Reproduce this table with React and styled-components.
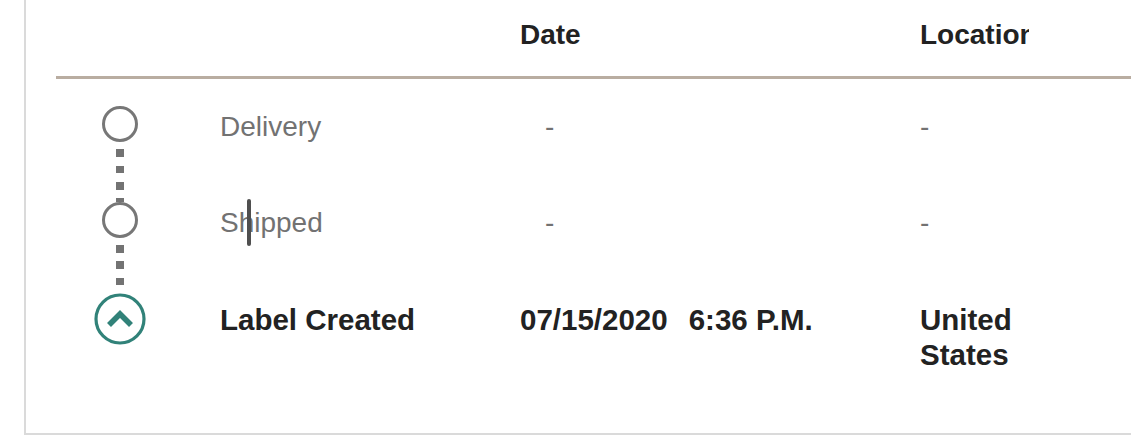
import React from 'react';
import styled, { createGlobalStyle } from 'styled-components';

const GlobalStyle = createGlobalStyle`
  html, body {
    margin: 0;
    padding: 0;
    background: #fff;
    overflow: hidden;
  }
  body {
    font-family: 'Liberation Sans', Arial, Helvetica, sans-serif;
    color: #222;
  }
`;

const Card = styled.div`
  margin: -2px -40px 0 24px;
  border: 2px solid #dadada;
  padding: 0 0 61px 30px;
  background: #fff;
`;

const Grid = styled.div`
  display: grid;
  grid-template-columns: 164px 300px 400px 1fr;
  align-items: start;
`;

const HeaderRow = styled(Grid)`
  padding: 17px 0 24px;
  border-bottom: 3px solid #b9ada1;
`;

const HeadCell = styled.div`
  font-size: 28px;
  line-height: 35px;
  font-weight: 700;
  color: #222;
  white-space: nowrap;
  overflow: hidden;
  width: ${({ $width }) => ($width ? `${$width}px` : 'auto')};
`;

const Body = styled.div`
  padding-top: 27px;
`;

const IconCell = styled.div`
  width: 128px;
  display: flex;
  flex-direction: column;
  align-items: center;
`;

const Ring = styled.div`
  width: 36px;
  height: 36px;
  box-sizing: border-box;
  border: 3px solid #777;
  border-radius: 50%;
  background: #fff;
`;

const Connector = styled.div`
  width: 8px;
  height: ${({ $length }) => $length}px;
  background: repeating-linear-gradient(
    to bottom,
    transparent 0 7px,
    #737373 7px 14.5px,
    transparent 14.5px 16.5px
  );
`;

const Cell = styled.div`
  position: relative;
  padding-top: ${({ $bold }) => ($bold ? 10 : 3)}px;
  padding-left: ${({ $indent }) => $indent || 0}px;
  font-size: ${({ $bold }) => ($bold ? 29.5 : 28)}px;
  line-height: ${({ $bold }) => ($bold ? '34.5px' : '35px')};
  font-weight: ${({ $bold }) => ($bold ? 700 : 400)};
  color: ${({ $bold }) => ($bold ? '#222' : '#727272')};
`;

const Time = styled.span`
  margin-left: 21px;
`;

const Caret = styled.span`
  position: absolute;
  left: 27px;
  top: -3px;
  width: 4px;
  height: 47px;
  border-radius: 2px;
  background: #4f4f4f;
`;

const ActiveIcon = () => (
  <svg width="52" height="52" viewBox="0 0 52 52">
    <circle cx="26" cy="26" r="24" fill="#fff" stroke="#318279" strokeWidth="3.2" />
    <polyline
      points="15,32 26,21 37,32"
      fill="none"
      stroke="#318279"
      strokeWidth="5.6"
      strokeLinejoin="miter"
    />
  </svg>
);

const events = [
  { status: 'Delivery', date: '-', location: '-', connector: 60 },
  { status: 'Shipped', date: '-', location: '-', connector: 55, caret: true },
  {
    status: 'Label Created',
    date: '07/15/2020',
    time: '6:36 P.M.',
    location: 'United States',
    active: true,
  },
];

const App = () => {
  return (
    <>
      <GlobalStyle />
      <Card>
        <HeaderRow>
          <div />
          <div />
          <HeadCell>Date</HeadCell>
          <HeadCell $width={109}>Location</HeadCell>
        </HeaderRow>
        <Body>
          {events.map((ev) => (
            <Grid key={ev.status}>
              <IconCell>
                {ev.active ? <ActiveIcon /> : <Ring />}
                {ev.connector && <Connector $length={ev.connector} />}
              </IconCell>
              <Cell $bold={ev.active}>
                {ev.status}
                {ev.caret && <Caret />}
              </Cell>
              <Cell $bold={ev.active} $indent={ev.active ? 0 : 25}>
                {ev.date}
                {ev.time && <Time>{ev.time}</Time>}
              </Cell>
              <Cell $bold={ev.active}>
                {ev.active ? (
                  <>
                    United
                    <br />
                    States
                  </>
                ) : (
                  ev.location
                )}
              </Cell>
            </Grid>
          ))}
        </Body>
      </Card>
    </>
  );
};

export default App;
